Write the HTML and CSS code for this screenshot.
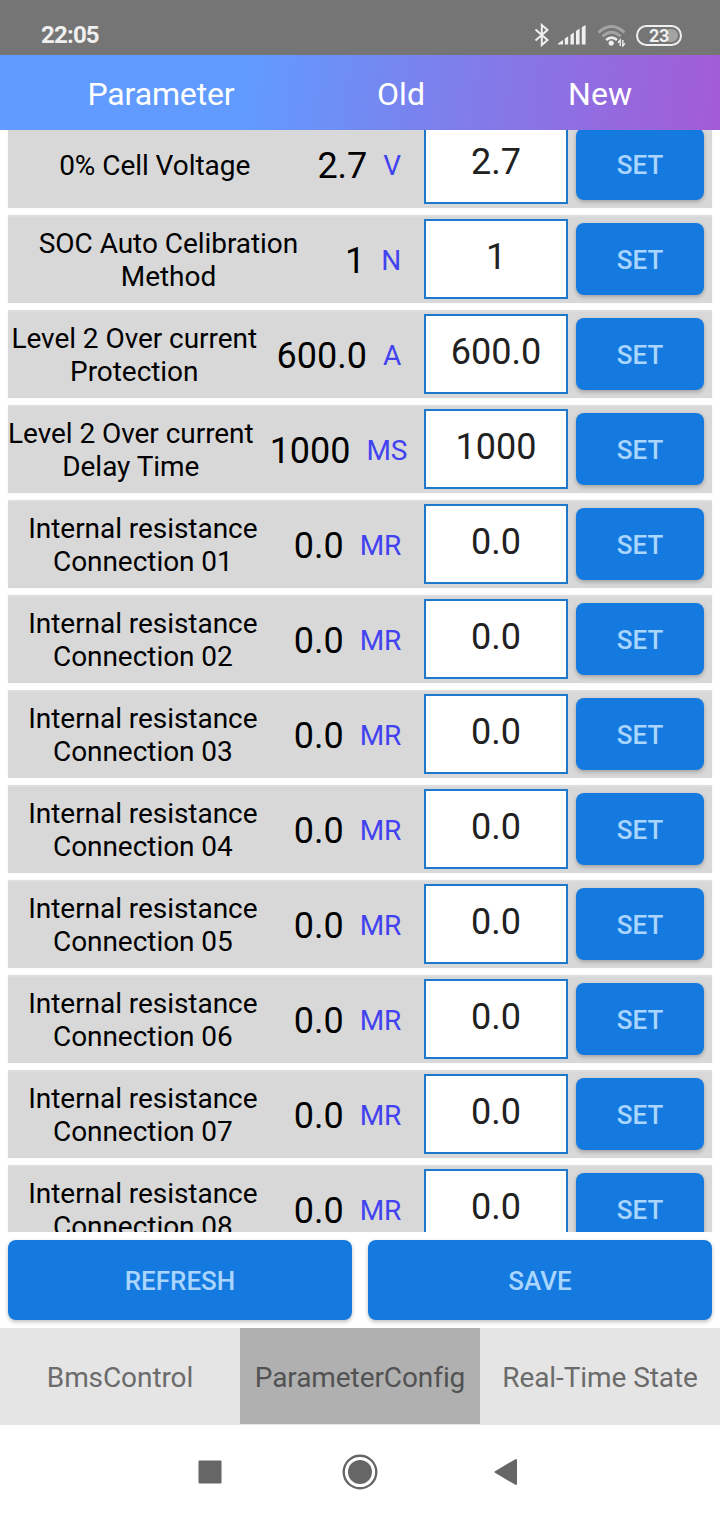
FILE: index.html
```html
<!DOCTYPE html>
<html lang="en">
<head>
    <meta charset="UTF-8">
    <meta name="viewport" content="width=device-width, initial-scale=1.0">
    <title>Parameter Config</title>
    <link rel="stylesheet" href="styles.css">
</head>
<body>
    <!-- Status Bar -->
    <div class="status-bar">
        <span class="clock">22:05</span>
        <div class="status-icons">
            <svg class="icon-bluetooth" width="16" height="24" viewBox="0 0 16 24" fill="none" stroke="#efefef" stroke-width="2">
                <path d="M1.5 6.5 L13.5 17 L7.8 22 V2 L13.5 7 L1.5 17.5"/>
            </svg>
            <svg class="icon-signal" width="28" height="20" viewBox="0 0 28 20" fill="#efefef">
                <path d="M0 19.5 V18.5 L5 15 V19.5 Z M6.8 19.5 V13.5 L10.2 11.2 V19.5 Z M12.5 19.5 V9.8 L15.9 7.4 V19.5 Z M18 19.5 V6 L21.6 3.6 V19.5 Z M23.8 19.5 V2.2 L27.6 0 V19.5 Z"/>
            </svg>
            <svg class="icon-wifi" width="30" height="24" viewBox="0 0 30 24" fill="none" stroke-width="2.8">
                <path stroke="#a3a3a3" d="M1.5 9.5 Q14.5 -2.5 27.5 9.5 M5.5 13.2 Q14.5 5.2 23.5 13.2"/>
                <path stroke="#efefef" d="M9.2 17 Q14.5 12.2 20 17"/>
                <circle cx="14.2" cy="20" r="2.6" fill="#efefef"/>
                <path stroke="#efefef" stroke-width="1.4" d="M23.2 23 V17 L21 19.8 M25.8 17 V23 L28 20.4"/>
            </svg>
            <div class="battery"><span class="battery-level">23</span></div>
        </div>
    </div>

    <!-- Table Header -->
    <div class="table-header">
        <span class="head-parameter">Parameter</span>
        <span class="head-old">Old</span>
        <span class="head-new">New</span>
    </div>

    <!-- Parameter Rows -->
    <div class="param-list">
        <div class="param-rows" id="param-rows"></div>
    </div>

    <!-- Actions -->
    <div class="actions">
        <button class="button">REFRESH</button>
        <button class="button">SAVE</button>
    </div>

    <!-- Tabs -->
    <div class="tabs">
        <div class="tab">BmsControl</div>
        <div class="tab active">ParameterConfig</div>
        <div class="tab">Real-Time State</div>
    </div>

    <!-- System Navigation -->
    <div class="nav-bar">
        <svg width="24" height="24" viewBox="0 0 24 24"><rect x=".5" y=".5" width="23" height="23" rx="1" fill="#666"/></svg>
        <svg class="nav-home" width="36" height="36" viewBox="0 0 36 36">
            <circle cx="18" cy="18" r="16.3" fill="none" stroke="#666" stroke-width="2.4"/>
            <circle cx="18" cy="18" r="12" fill="#666"/>
        </svg>
        <svg width="24" height="28" viewBox="0 0 24 28"><path d="M22 2 V26 L1.5 14 Z" fill="#666" stroke="#666" stroke-width="2" stroke-linejoin="round"/></svg>
    </div>

    <script>
        const params = [
            ['0% Cell Voltage', '2.7', 'V'],
            ['SOC Auto Celibration<br>Method', '1', 'N'],
            ['Level 2 Over current<br>Protection', '600.0', 'A'],
            ['Level 2 Over current<br>Delay Time', '1000', 'MS']
        ];

        for (let i = 1; i <= 8; i++) {
            params.push([`Internal resistance<br>Connection 0${i}`, '0.0', 'MR']);
        }

        document.getElementById('param-rows').innerHTML = params.map(([name, value, unit]) => `
            <div class="param-row">
                <div class="param-info">
                    <span class="param-name">${name}</span>
                    <span class="param-value">${value}</span>
                    <span class="param-unit">${unit}</span>
                    <span class="param-space"></span>
                </div>
                <div class="param-input">${value}</div>
                <button class="button set-button">SET</button>
            </div>`).join('');
    </script>
</body>
</html>
```
FILE: styles.css
```css
* {
    margin: 0;
    padding: 0;
    box-sizing: border-box;
    font-family: Roboto, "Liberation Sans", sans-serif;
}

body {
    background-color: #ffffff;
    width: 720px;
    height: 1520px;
    overflow: hidden;
    display: flex;
    flex-direction: column;
}

/* Status Bar */
.status-bar {
    height: 55px;
    flex-shrink: 0;
    padding: 15px 38px 0 41px;
    background-color: #757575;
    color: #efefef;
    display: flex;
    justify-content: space-between;
    align-items: center;
}

.clock {
    font-size: 24px;
    font-weight: 700;
    letter-spacing: -0.8px;
}

.status-icons {
    display: flex;
    align-items: center;
}

.icon-signal {
    margin-left: 8px;
}

.icon-wifi {
    margin-left: 11px;
}

.battery {
    width: 46px;
    height: 21px;
    margin-left: 9px;
    padding: 2px;
    border: 2px solid #efefef;
    border-radius: 11px;
    display: flex;
}

.battery-level {
    flex: 1;
    border-radius: 7px;
    background: linear-gradient(90deg, transparent 74%, #a3a3a3 74%);
    font-size: 18px;
    font-weight: 700;
    line-height: 13px;
    letter-spacing: -0.4px;
    padding-left: 9px;
}

/* Table Header */
.table-header {
    height: 75px;
    flex-shrink: 0;
    padding-top: 2px;
    background: linear-gradient(97deg, #619bff 0%, #619bff 34%, #7884ee 57%, #a35bd6 100%);
    color: #ffffff;
    font-size: 32px;
    display: flex;
    align-items: center;
    text-align: center;
}

.head-parameter {
    width: 322px;
    letter-spacing: -0.15px;
}

.head-old {
    width: 158px;
}

.head-new {
    width: 240px;
}

/* Parameter Rows */
.param-list {
    height: 1102px;
    flex-shrink: 0;
    overflow: hidden;
}

.param-rows {
    margin-top: -10px;
    padding: 0 8px;
    display: flex;
    flex-direction: column;
    gap: 7px;
}

.param-row {
    height: 88px;
    flex-shrink: 0;
    padding-right: 8px;
    background-color: #d8d8d8;
    box-shadow: inset 0 2px 1px #dedede, 0 0 2px rgba(0, 0, 0, 0.06);
    display: flex;
    align-items: center;
    gap: 8px;
}

.param-info {
    flex: 1;
    min-width: 0;
    display: flex;
    align-items: center;
    white-space: nowrap;
}

.param-name {
    flex: 1 0 auto;
    padding-top: 2px;
    font-size: 28px;
    line-height: 33px;
    letter-spacing: -0.05px;
    text-align: center;
    color: #000000;
}

.param-value {
    margin: 0 16px;
    padding-top: 4px;
    font-size: 36px;
    color: #000000;
}

.param-unit {
    padding-top: 2px;
    font-size: 28px;
    letter-spacing: -0.2px;
    color: #4242f0;
}

.param-space {
    flex: 0 1 15px;
}

.param-input {
    width: 144px;
    height: 80px;
    padding-bottom: 4px;
    border: 2px solid #1e78cc;
    background-color: #ffffff;
    color: #212121;
    font-size: 36px;
    display: flex;
    align-items: center;
    justify-content: center;
}

.button {
    border: none;
    border-radius: 8px;
    background-color: #147adf;
    box-shadow: 0 2px 4px rgba(0, 0, 0, 0.25);
    color: #a9d5ff;
    font-size: 26px;
    font-weight: 500;
}

.set-button {
    width: 128px;
    height: 72px;
    padding-top: 2px;
}

/* Actions */
.actions {
    height: 96px;
    flex-shrink: 0;
    padding: 8px;
    display: flex;
    gap: 16px;
}

.actions .button {
    flex: 1;
    padding-top: 2px;
}

/* Tabs */
.tabs {
    height: 97px;
    flex-shrink: 0;
    padding-bottom: 1px;
    background-color: #e5e5e5;
    display: flex;
}

.tab {
    flex: 1;
    padding-top: 2px;
    color: #6b6b6b;
    font-size: 28px;
    letter-spacing: -0.08px;
    display: flex;
    align-items: center;
    justify-content: center;
}

.tab.active {
    background-color: #b0b0b0;
    color: #525252;
}

/* System Navigation */
.nav-bar {
    flex: 1;
    padding: 0 202px 1px 198px;
    display: flex;
    align-items: center;
    justify-content: space-between;
}

.nav-home {
    margin-left: 3px;
}
```
